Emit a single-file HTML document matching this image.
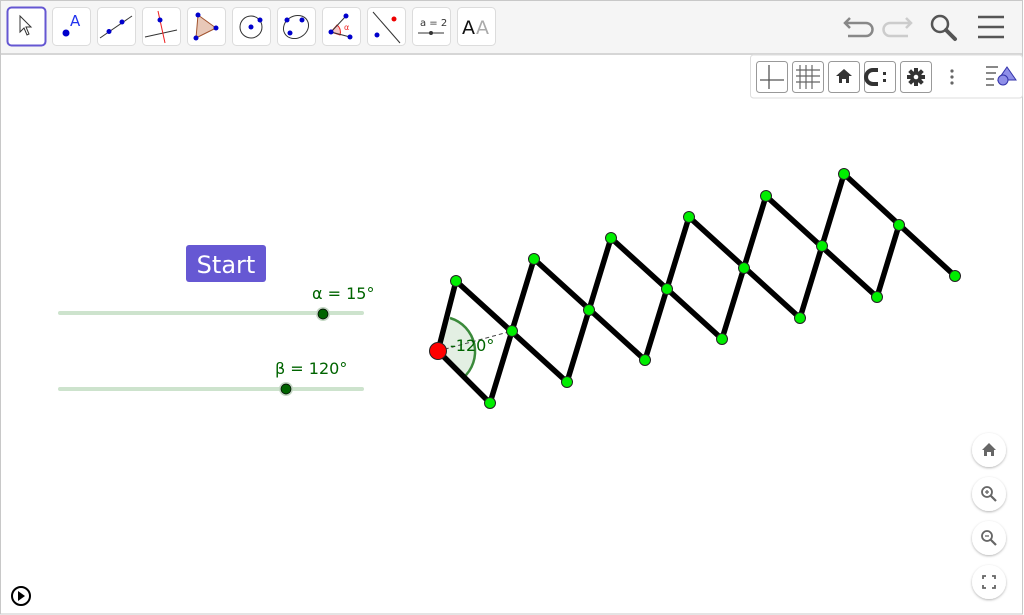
<!DOCTYPE html>
<html><head><meta charset="utf-8"><style>
html,body{margin:0;padding:0;width:1024px;height:615px;overflow:hidden;background:#fff;font-family:"Liberation Sans","DejaVu Sans",sans-serif}
svg{position:absolute;left:0;top:0}
</style></head><body>
<svg width="1024" height="615" viewBox="0 0 1024 615" xmlns="http://www.w3.org/2000/svg" font-family="DejaVu Sans, sans-serif">
<rect x="0" y="0" width="1024" height="615" fill="#fff"/>
<rect x="0.5" y="0.5" width="1022" height="613.5" fill="none" stroke="#c8c8c8"/>
<rect x="1" y="1" width="1021" height="52" fill="#f5f5f5"/>
<rect x="1" y="53" width="1021" height="2" fill="#d6d6d6"/>
<g fill="#fff" stroke="#dcdcdc">
<rect x="52.5" y="7.5" width="38" height="38" rx="4"/>
<rect x="97.5" y="7.5" width="38" height="38" rx="4"/>
<rect x="142.5" y="7.5" width="38" height="38" rx="4"/>
<rect x="187.5" y="7.5" width="38" height="38" rx="4"/>
<rect x="232.5" y="7.5" width="38" height="38" rx="4"/>
<rect x="277.5" y="7.5" width="38" height="38" rx="4"/>
<rect x="322.5" y="7.5" width="38" height="38" rx="4"/>
<rect x="367.5" y="7.5" width="38" height="38" rx="4"/>
<rect x="412.5" y="7.5" width="38" height="38" rx="4"/>
<rect x="457.5" y="7.5" width="38" height="38" rx="4"/>
</g>
<rect x="7.5" y="7.5" width="38" height="38" rx="4" fill="#fff" stroke="#6557d2" stroke-width="2"/>
<path d="M20 16 L20 32 L24 28 L27 35 L29 34 L26 27 L31 27 Z" fill="#fff" stroke="#333" stroke-width="1"/>
<circle cx="66" cy="33" r="3.5" fill="#0000cc"/><text x="70" y="26" font-size="15" fill="#2233ee">A</text>
<line x1="100" y1="38" x2="132" y2="16" stroke="#333"/><circle cx="109" cy="31.5" r="2.5" fill="#0000cc"/><circle cx="122" cy="22" r="2.5" fill="#0000cc"/>
<line x1="145" y1="37" x2="177" y2="30" stroke="#333"/><line x1="158" y1="11" x2="165" y2="43" stroke="#e22"/><circle cx="160" cy="20" r="2.5" fill="#0000cc"/>
<path d="M198 15 L216 28 L196 38 Z" fill="#e8c8b8" stroke="#a0522d"/><circle cx="198" cy="15" r="2.5" fill="#0000cc"/><circle cx="216" cy="28" r="2.5" fill="#0000cc"/><circle cx="196" cy="38" r="2.5" fill="#0000cc"/>
<circle cx="251" cy="27" r="11" fill="none" stroke="#333"/><circle cx="251" cy="27" r="2.5" fill="#0000cc"/><circle cx="260" cy="20" r="2.5" fill="#0000cc"/>
<ellipse cx="296" cy="27" rx="13" ry="11" transform="rotate(-30 296 27)" fill="none" stroke="#333"/><circle cx="287" cy="20" r="2.5" fill="#0000cc"/><circle cx="302" cy="20" r="2.5" fill="#0000cc"/><circle cx="290" cy="33" r="2.5" fill="#0000cc"/>
<path d="M331 32 L337 25 A9 9 0 0 1 340 35 Z" fill="#f6c8c8" stroke="#e22"/><line x1="331" y1="32" x2="346" y2="16" stroke="#333"/><line x1="331" y1="32" x2="350" y2="37" stroke="#333"/><circle cx="331" cy="32" r="2.5" fill="#0000cc"/><circle cx="346" cy="16" r="2.5" fill="#0000cc"/><circle cx="350" cy="37" r="2.5" fill="#0000cc"/><text x="344" y="30" font-size="8" fill="#e22">α</text>
<line x1="373" y1="12" x2="400" y2="43" stroke="#333"/><circle cx="394" cy="19" r="2.5" fill="#e00"/><circle cx="377" cy="35" r="2.5" fill="#0000cc"/>
<text x="420" y="26" font-size="10" fill="#333">a = 2</text><line x1="418" y1="33" x2="444" y2="33" stroke="#333"/><circle cx="431" cy="33" r="2" fill="#333"/>
<text x="462" y="34" font-size="19" fill="#111">A</text><text x="476" y="34" font-size="19" fill="#aaa">A</text>
<path d="M850 18 L845 23 L850 28 M845 23 L866 23 A6 6 0 0 1 866 36 L848 36" fill="none" stroke="#888" stroke-width="2.5"/>
<path d="M906 18 L911 23 L906 28 M911 23 L890 23 A6 6 0 0 0 890 36 L908 36" fill="none" stroke="#ccc" stroke-width="2.5"/>
<circle cx="940" cy="24" r="8" fill="none" stroke="#555" stroke-width="2.5"/><line x1="946" y1="30" x2="955" y2="39" stroke="#555" stroke-width="4" stroke-linecap="round"/>
<g stroke="#555" stroke-width="2.5"><line x1="978" y1="17" x2="1004" y2="17"/><line x1="978" y1="27" x2="1004" y2="27"/><line x1="978" y1="37" x2="1004" y2="37"/></g>
<rect x="750.5" y="55" width="272" height="43" fill="#fff" stroke="#ddd" rx="3"/>
<g fill="#fff" stroke="#999">
<rect x="756.5" y="61.5" width="31" height="31" rx="3"/>
<rect x="792.5" y="61.5" width="31" height="31" rx="3"/>
<rect x="828.5" y="61.5" width="31" height="31" rx="3"/>
<rect x="864.5" y="61.5" width="31" height="31" rx="3"/>
<rect x="900.5" y="61.5" width="31" height="31" rx="3"/>
</g>
<g stroke="#555" stroke-width="1.3"><line x1="769" y1="65" x2="769" y2="89"/><line x1="760" y1="80" x2="784" y2="80"/></g>
<g stroke="#666" stroke-width="1.2"><line x1="800" y1="65" x2="800" y2="89"/><line x1="806" y1="65" x2="806" y2="89"/><line x1="812" y1="65" x2="812" y2="89"/><line x1="796" y1="70" x2="820" y2="70"/><line x1="796" y1="76" x2="820" y2="76"/><line x1="796" y1="82" x2="820" y2="82"/></g>
<path d="M844 69 L852 76 L849 76 L849 83 L846 83 L846 79 L842 79 L842 83 L839 83 L839 76 L836 76 Z" fill="#333"/>
<path d="M878 70 L873 70 A6 6 0 0 0 873 84 L878 84" fill="none" stroke="#333" stroke-width="4"/><rect x="883" y="72" width="3" height="3" fill="#333"/><rect x="883" y="79" width="3" height="3" fill="#333"/>
<g fill="#333"><circle cx="916" cy="77" r="6"/>
<rect x="914" y="68" width="4" height="18"/><rect x="907" y="75" width="18" height="4"/>
<rect x="914" y="68" width="4" height="18" transform="rotate(45 916 77)"/><rect x="907" y="75" width="18" height="4" transform="rotate(45 916 77)"/></g>
<circle cx="916" cy="77" r="2.3" fill="#fff"/>
<g fill="#666"><circle cx="952" cy="71" r="1.6"/><circle cx="952" cy="77" r="1.6"/><circle cx="952" cy="83" r="1.6"/></g>
<g stroke="#888" stroke-width="2"><line x1="986" y1="67" x2="998" y2="67"/><line x1="986" y1="73" x2="996" y2="73"/><line x1="986" y1="79" x2="994" y2="79"/><line x1="986" y1="85" x2="994" y2="85"/></g>
<path d="M1007 67 L1016 80 L998 80 Z" fill="#8f8fe8" stroke="#3333aa"/><circle cx="1003" cy="80" r="5" fill="#8f8fe8" stroke="#3333aa"/>
<rect x="186" y="245" width="80" height="37" rx="3" fill="#6658d3"/>
<text x="226" y="273" font-size="24" fill="#fff" text-anchor="middle">Start</text>
<line x1="60" y1="313" x2="362" y2="313" stroke="#cde3cd" stroke-width="4" stroke-linecap="round"/>
<circle cx="323" cy="314" r="7" fill="#c4d8c4"/><circle cx="323" cy="314" r="5" fill="#006400" stroke="#000" stroke-width=".7"/>
<text x="312" y="299" font-size="16" fill="#006400">α = 15°</text>
<line x1="60" y1="389" x2="362" y2="389" stroke="#cde3cd" stroke-width="4" stroke-linecap="round"/>
<circle cx="286" cy="389" r="7" fill="#c4d8c4"/><circle cx="286" cy="389" r="5" fill="#006400" stroke="#000" stroke-width=".7"/>
<text x="275" y="374" font-size="16" fill="#006400">β = 120°</text>
<path d="M438 351 L450 318 A35 35 0 0 1 463 378 Z" fill="#e3efe3"/>
<path d="M450 318 A35 35 0 0 1 463 378" fill="none" stroke="#3b8a3b" stroke-width="2.5"/>
<line x1="438" y1="351" x2="512" y2="331" stroke="#444" stroke-dasharray="4 3"/>
<text x="450" y="351" font-size="16" fill="#006400">-120°</text>
<g stroke="#000" stroke-width="5.5" stroke-linecap="round" fill="none">
<path d="M490 403 L438 351 L456 281"/>
<path d="M456 281 L567 382 M490 403 L534 259"/>
<path d="M534 259 L645 360 M567 382 L611 238"/>
<path d="M611 238 L722 339 M645 360 L689 217"/>
<path d="M689 217 L800 318 M722 339 L766 196"/>
<path d="M766 196 L877 297 M800 318 L844 174"/>
<path d="M844 174 L955 276 M877 297 L899 225"/>
</g>
<g fill="#00ee00" stroke="#222" stroke-width="1">
<circle cx="456" cy="281" r="5.5"/><circle cx="534" cy="259" r="5.5"/><circle cx="611" cy="238" r="5.5"/><circle cx="689" cy="217" r="5.5"/><circle cx="766" cy="196" r="5.5"/><circle cx="844" cy="174" r="5.5"/>
<circle cx="512" cy="331" r="5.5"/><circle cx="589" cy="310" r="5.5"/><circle cx="667" cy="289" r="5.5"/><circle cx="744" cy="268" r="5.5"/><circle cx="822" cy="246" r="5.5"/><circle cx="899" cy="225" r="5.5"/>
<circle cx="490" cy="403" r="5.5"/><circle cx="567" cy="382" r="5.5"/><circle cx="645" cy="360" r="5.5"/><circle cx="722" cy="339" r="5.5"/><circle cx="800" cy="318" r="5.5"/><circle cx="877" cy="297" r="5.5"/>
<circle cx="955" cy="276" r="5.5"/>
</g>
<circle cx="438" cy="351" r="8.5" fill="#f00" stroke="#222" stroke-width="1"/>
<defs><filter id="sh" x="-30%" y="-30%" width="160%" height="160%"><feDropShadow dx="0" dy="1" stdDeviation="1.2" flood-color="#000" flood-opacity=".3"/></filter></defs>
<g fill="#fff" filter="url(#sh)">
<circle cx="989" cy="450" r="17"/><circle cx="989" cy="494" r="17"/><circle cx="989" cy="538" r="17"/><circle cx="989" cy="582" r="17"/>
</g>
<path d="M989 443 L996 450 L994 450 L994 456 L991 456 L991 452 L987 452 L987 456 L984 456 L984 450 L982 450 Z" fill="#666"/>
<circle cx="987" cy="492" r="5" fill="none" stroke="#666" stroke-width="1.8"/><line x1="991" y1="496" x2="996" y2="501" stroke="#666" stroke-width="2.2"/><path d="M985 492 H989 M987 490 V494" stroke="#666" stroke-width="1.3"/>
<circle cx="987" cy="536" r="5" fill="none" stroke="#666" stroke-width="1.8"/><line x1="991" y1="540" x2="996" y2="545" stroke="#666" stroke-width="2.2"/><path d="M985 536 H989" stroke="#666" stroke-width="1.3"/>
<path d="M983 579 V576 H986 M992 576 H995 V579 M995 585 V588 H992 M986 588 H983 V585" fill="none" stroke="#666" stroke-width="1.8"/>
<circle cx="21" cy="596" r="9" fill="none" stroke="#000" stroke-width="2"/><path d="M18 591 L25 596 L18 601 Z" fill="#000"/>
</svg>
</body></html>
